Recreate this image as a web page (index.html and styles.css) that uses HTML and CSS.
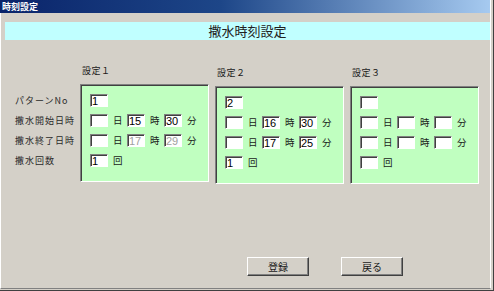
FILE: index.html
```html
<!DOCTYPE html>
<html>

<head>
	<title>時刻設定</title>
	<link rel="stylesheet" href="styles.css">
</head>

<body>
	<div class="window">
		<div class="client">
			<div class="titlebar">時刻設定</div>

			<div class="content">
				<h1 class="heading">撒水時刻設定</h1>

				<div class="settings">
					<!-- 行ラベル -->
					<div class="col">
						<div class="col-title"></div>
						<div class="labels">
							<div class="row">パターンNo</div>
							<div class="row">撒水開始日時</div>
							<div class="row">撒水終了日時</div>
							<div class="row">撒水回数</div>
						</div>
					</div>

					<!-- 設定１ -->
					<div class="col">
						<div class="col-title">設定１</div>
						<div class="panel">
							<div class="row"><input class="field" type="text" value="1"></div>
							<div class="row">
								<input class="field" type="text" value=""><span class="unit">日</span>
								<input class="field" type="text" value="15"><span class="unit">時</span>
								<input class="field" type="text" value="30"><span class="unit">分</span>
							</div>
							<div class="row">
								<input class="field" type="text" value=""><span class="unit">日</span>
								<input class="field" type="text" value="17" disabled><span class="unit">時</span>
								<input class="field" type="text" value="29" disabled><span class="unit">分</span>
							</div>
							<div class="row"><input class="field" type="text" value="1"><span class="unit">回</span></div>
						</div>
					</div>

					<!-- 設定２ -->
					<div class="col col-low">
						<div class="col-title">設定２</div>
						<div class="panel">
							<div class="row"><input class="field" type="text" value="2"></div>
							<div class="row">
								<input class="field" type="text" value=""><span class="unit">日</span>
								<input class="field" type="text" value="16"><span class="unit">時</span>
								<input class="field" type="text" value="30"><span class="unit">分</span>
							</div>
							<div class="row">
								<input class="field" type="text" value=""><span class="unit">日</span>
								<input class="field" type="text" value="17"><span class="unit">時</span>
								<input class="field" type="text" value="25"><span class="unit">分</span>
							</div>
							<div class="row"><input class="field" type="text" value="1"><span class="unit">回</span></div>
						</div>
					</div>

					<!-- 設定３ -->
					<div class="col col-low">
						<div class="col-title">設定３</div>
						<div class="panel">
							<div class="row"><input class="field" type="text" value=""></div>
							<div class="row">
								<input class="field" type="text" value=""><span class="unit">日</span>
								<input class="field" type="text" value=""><span class="unit">時</span>
								<input class="field" type="text" value=""><span class="unit">分</span>
							</div>
							<div class="row">
								<input class="field" type="text" value=""><span class="unit">日</span>
								<input class="field" type="text" value=""><span class="unit">時</span>
								<input class="field" type="text" value=""><span class="unit">分</span>
							</div>
							<div class="row"><input class="field" type="text" value=""><span class="unit">回</span></div>
						</div>
					</div>
				</div>

				<div class="actions">
					<button class="btn">登録</button>
					<button class="btn">戻る</button>
				</div>
			</div>
		</div>
	</div>
</body>

</html>
```

FILE: styles.css
```css
body {
	margin: 0;
	font-family: "Noto Sans CJK JP", "Noto Sans", sans-serif;
	color: #1a1a1a;
}

/* ウィンドウ枠 */
.window {
	width: 494px;
	height: 291px;
	box-sizing: border-box;
	background-color: #d4d0c8;
	border-right: 1px solid #404040;
	border-bottom: 1px solid #404040;
	padding-right: 2px;
	padding-bottom: 1px;
}

.client {
	height: 100%;
	box-sizing: border-box;
	border-right: 1px solid #ffffff;
	border-bottom: 1px solid #808080;
	border-left: 1px solid #ffffff;
}

/* タイトルバー */
.titlebar {
	height: 13px;
	line-height: 13px;
	padding-left: 2px;
	margin-left: -1px;
	background: linear-gradient(to right, #0a246a, #1d4688 45%, #a6caf0);
	color: #ffffff;
	font-size: 9px;
	font-weight: bold;
}

.content {
	padding-left: 4px;
}

/* 見出し */
.heading {
	margin: 9px 0 0 0;
	height: 18px;
	line-height: 18px;
	background-color: #c0ffff;
	text-align: center;
	font-size: 13px;
	font-weight: normal;
	color: #202020;
}

.settings {
	display: grid;
	grid-template-columns: 69px 129px 129px 129px;
	column-gap: 6px;
	margin-top: 24px;
}

.col-title {
	height: 20px;
	padding-left: 2px;
	font-size: 9px;
	letter-spacing: 0.5px;
	line-height: 14px;
}

.col-low {
	margin-top: 2px;
}

.labels,
.panel {
	display: flex;
	flex-direction: column;
	gap: 7px;
	padding-top: 9px;
	padding-bottom: 14px;
}

.labels {
	padding-top: 10px;
	padding-left: 10px;
}

.labels .row {
	font-size: 9px;
	letter-spacing: 1px;
	white-space: nowrap;
	color: #2a2a2a;
}

/* 設定パネル */
.panel {
	padding-left: 9px;
	background-color: #c0ffc0;
	border-top: 1px solid #808080;
	border-left: 1px solid #808080;
	border-right: 1px solid #ffffff;
	border-bottom: 1px solid #ffffff;
	box-shadow: inset 1px 1px 0 #404040;
}

.row {
	display: flex;
	align-items: center;
	height: 13px;
	line-height: 13px;
}

.field {
	width: 18px;
	height: 13px;
	box-sizing: border-box;
	margin: 0;
	padding: 0 0 0 1px;
	background-color: #ffffff;
	border-top: 1px solid #808080;
	border-left: 1px solid #808080;
	border-right: 1px solid #ffffff;
	border-bottom: 1px solid #ffffff;
	box-shadow: inset 1px 1px 0 #404040;
	font-family: "Liberation Sans", sans-serif;
	font-size: 11px;
	color: #000000;
	outline: none;
}

.field:disabled {
	color: #a0a0a0;
}

.unit {
	width: 9px;
	margin: 0 5px;
	font-size: 9.5px;
}

/* ボタン */
.actions {
	display: flex;
	gap: 32px;
	margin-top: 73px;
	padding-left: 242px;
}

.btn {
	width: 62px;
	height: 19px;
	margin: 0;
	padding: 0;
	background-color: #d4d0c8;
	border-top: 1px solid #ffffff;
	border-left: 1px solid #ffffff;
	border-right: 1px solid #404040;
	border-bottom: 1px solid #404040;
	box-shadow: inset -1px -1px 0 #808080;
	font-family: "Noto Sans CJK JP", sans-serif;
	font-size: 10px;
	color: #1a1a1a;
}
```
